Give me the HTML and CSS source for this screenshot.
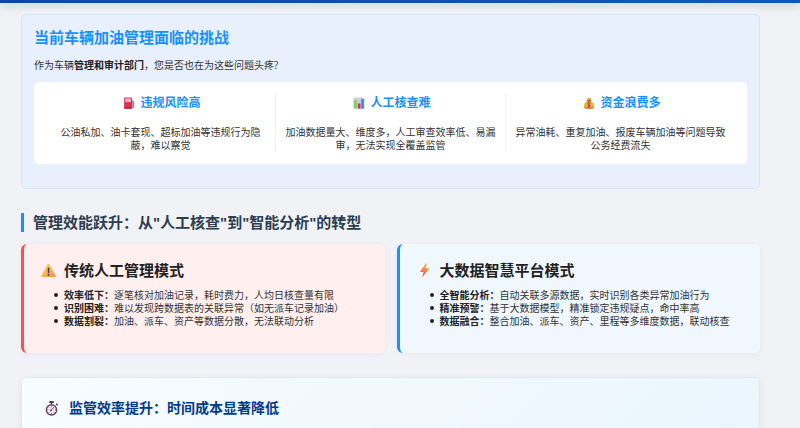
FILE: index.html
```
<!DOCTYPE html>
<html lang="zh-CN">
<head>
  <meta charset="UTF-8">
  <meta name="viewport" content="width=device-width, initial-scale=1.0">
  <title>车辆加油管理</title>
  <link rel="stylesheet" href="styles.css">
</head>
<body>
  <header class="top-bar"></header>

  <main class="container">
    <section class="challenge">
      <h2>当前车辆加油管理面临的挑战</h2>
      <p class="intro">作为车辆<strong>管理和审计部门</strong>，您是否也在为这些问题头疼?</p>
      <div class="pain-points">
        <div class="pain-item">
          <h3>
            <svg class="icon-sm" viewBox="0 0 32 32" aria-hidden="true">
              <path d="M23 8l6 5v12q0 4-4 4h-2" fill="#a9a0ae" stroke="#7d6b78" stroke-width="2"/>
              <rect x="3" y="1" width="21" height="30" rx="3" fill="#e5304f"/>
              <rect x="6" y="4" width="15" height="9" rx="1" fill="#e9d3de"/>
              <path d="M8 9h11" stroke="#a0869c" stroke-width="2"/>
              <path d="M3 26h21v3q0 2-2 2H5q-2 0-2-2z" fill="#c9214a"/>
            </svg>
            违规风险高
          </h3>
          <p>公油私加、油卡套现、超标加油等违规行为隐蔽，难以察觉</p>
        </div>
        <div class="pain-item">
          <h3>
            <svg class="icon-sm" viewBox="0 0 32 32" aria-hidden="true">
              <rect x="1" y="1" width="30" height="30" rx="3" fill="#d5cfdd"/>
              <path d="M1 11h30M1 21h30M11 1v30M21 1v30" stroke="#bdb5c8"/>
              <rect x="3" y="9" width="7" height="22" fill="#6fd65b"/>
              <rect x="13" y="17" width="7" height="14" fill="#e5266c"/>
              <rect x="22" y="5" width="7" height="26" fill="#2098dc"/>
            </svg>
            人工核查难
          </h3>
          <p>加油数据量大、维度多，人工审查效率低、易漏审，无法实现全覆盖监管</p>
        </div>
        <div class="pain-item">
          <h3>
            <svg class="icon-sm" viewBox="0 0 32 32" aria-hidden="true">
              <path d="M12 9L9 4q4 1 7-3 3 4 7 3l-3 5z" fill="#f4a32d"/>
              <path d="M12 9h8q10 7 10 15 0 7-7 7H9q-7 0-7-7 0-8 10-15z" fill="#f9b03a"/>
              <path d="M3 26q2 5 7 5h13q5 0 7-5-13 4-27 0z" fill="#dc7040"/>
              <path d="M11 10h10" stroke="#8b4a45" stroke-width="3"/>
              <path d="M20 16q-8-2-8 2 0 2 4 3t4 3q0 3-8 1M16 13v15" fill="none" stroke="#75443f" stroke-width="2"/>
            </svg>
            资金浪费多
          </h3>
          <p>异常油耗、重复加油、报废车辆加油等问题导致公务经费流失</p>
        </div>
      </div>
    </section>

    <h2 class="section-title">管理效能跃升：从"人工核查"到"智能分析"的转型</h2>

    <div class="compare">
      <section class="mode-card traditional">
        <h3>
          <svg class="icon" viewBox="0 0 32 32" aria-hidden="true">
            <defs>
              <linearGradient id="warn" x1="0" y1="0" x2="1" y2="1">
                <stop offset="0" stop-color="#ffd45c"/>
                <stop offset="1" stop-color="#f2933c"/>
              </linearGradient>
            </defs>
            <path d="M14 3q2-3 4 0l13 24q1 3-2 3H3q-3 0-2-3z" fill="url(#warn)"/>
            <path d="M16 11v9" stroke="#46384f" stroke-width="3" stroke-linecap="round"/>
            <circle cx="16" cy="25" r="2" fill="#46384f"/>
          </svg>
          传统人工管理模式
        </h3>
        <ul>
          <li><strong>效率低下：</strong>逐笔核对加油记录，耗时费力，人均日核查量有限</li>
          <li><strong>识别困难：</strong>难以发现跨数据表的关联异常（如无派车记录加油）</li>
          <li><strong>数据割裂：</strong>加油、派车、资产等数据分散，无法联动分析</li>
        </ul>
      </section>

      <section class="mode-card platform">
        <h3>
          <svg class="icon" viewBox="0 0 32 32" aria-hidden="true">
            <defs>
              <linearGradient id="bolt" x1="0" y1="0" x2="0" y2="1">
                <stop offset="0" stop-color="#ffad3b"/>
                <stop offset="1" stop-color="#f7474f"/>
              </linearGradient>
            </defs>
            <path d="M19 1L7 17q-1 2 1 2h6l-3 12 14-18q1-2-1-2h-6l3-9z" fill="url(#bolt)"/>
          </svg>
          大数据智慧平台模式
        </h3>
        <ul>
          <li><strong>全智能分析：</strong>自动关联多源数据，实时识别各类异常加油行为</li>
          <li><strong>精准预警：</strong>基于大数据模型，精准锁定违规疑点，命中率高</li>
          <li><strong>数据融合：</strong>整合加油、派车、资产、里程等多维度数据，联动核查</li>
        </ul>
      </section>
    </div>

    <section class="efficiency">
      <h3>
        <svg class="icon" viewBox="0 0 32 32" aria-hidden="true">
          <rect x="11" y="0" width="10" height="4" rx="1" fill="#49384f"/>
          <path d="M16 3v5M26 6l3 3" stroke="#49384f" stroke-width="3"/>
          <circle cx="16" cy="19" r="11" fill="#f0e8f3" stroke="#5b4564" stroke-width="3"/>
          <path d="M16 10v2M16 26v2M7 19h2M23 19h2M10 13l1 1M10 25l1-1M21 24l1 1" stroke="#6b5874" stroke-width="2"/>
          <path d="M14 21l7-8" stroke="#e0305c" stroke-width="2"/>
          <circle cx="15" cy="20" r="2" fill="#49384f"/>
        </svg>
        监管效率提升：时间成本显著降低
      </h3>
    </section>
  </main>
</body>
</html>
```
FILE: styles.css
```
* {
  box-sizing: border-box;
  margin: 0;
  padding: 0;
}
body {
  font-family: "Open Sans", "Noto Sans CJK SC", sans-serif;
  font-size: 10px;
  line-height: 13px;
  color: #333;
  background-color: #f0f2f5;
}
strong {
  color: #222;
}
.top-bar {
  height: 3px;
  background: linear-gradient(90deg, #0d47a1, #1557b5);
  box-shadow: 0 2px 8px rgba(0, 0, 0, 0.25);
}
.container {
  padding: 11px 40px 0 21px;
}

/* challenges */
.challenge {
  padding: 12px 12px 24px;
  background-color: #e8f0fe;
  border: 1px solid #d3e5fd;
  border-radius: 5px;
  margin-bottom: 24px;
}
.challenge h2 {
  font-size: 15px;
  line-height: 20px;
  color: #1890ff;
  margin-bottom: 12px;
}
.intro {
  margin-bottom: 10px;
}
.pain-points {
  display: flex;
  padding: 12px;
  background-color: #fff;
  border-radius: 5px;
}
.pain-item {
  flex: 1;
  padding: 0 8px;
  text-align: center;
  border-right: 1px solid #f0f0f0;
}
.pain-item:last-child {
  border-right: none;
}
.pain-item h3 {
  display: flex;
  justify-content: center;
  align-items: center;
  gap: 5px;
  padding-left: 3px;
  font-size: 12px;
  line-height: 18px;
  color: #1890ff;
  margin-bottom: 14px;
}
.icon-sm {
  width: 12px;
  height: 12px;
}

/* comparison */
.section-title {
  font-size: 15px;
  line-height: 19px;
  color: #2c3e50;
  border-left: 3px solid #1890ff;
  padding-left: 9px;
  margin-bottom: 12px;
}
.compare {
  display: grid;
  grid-template-columns: 1fr 1fr;
  gap: 12px;
  margin-bottom: 24px;
}
.mode-card {
  padding: 15px 17px 25px;
  border-left: 3px solid;
  border-radius: 6px;
  box-shadow: 0 1px 6px rgba(0, 0, 0, 0.05);
}
.mode-card h3 {
  display: flex;
  align-items: center;
  gap: 8px;
  font-size: 15px;
  line-height: 22px;
  color: #222;
  margin-bottom: 8px;
}
.mode-card ul {
  padding-left: 23px;
  list-style: none;
}
.mode-card li::before {
  content: "";
  display: inline-block;
  width: 4px;
  height: 4px;
  margin: 0 6px 0 -10px;
  border-radius: 50%;
  background-color: #222;
  vertical-align: 2px;
}
.traditional {
  background-color: #fff0ef;
  border-left-color: #ff4d4f;
}
.platform {
  background-color: #f0f7ff;
  border-left-color: #1890ff;
}
.icon {
  width: 15px;
  height: 15px;
}

/* efficiency */
.efficiency {
  padding: 20px 22px 24px;
  background: linear-gradient(135deg, #f7fcff, #eaf5fd);
  border: 1px solid #d9ebf5;
  border-radius: 6px;
  box-shadow: 0 2px 8px rgba(0, 0, 0, 0.06);
}
.efficiency h3 {
  display: flex;
  align-items: center;
  gap: 10px;
  font-size: 14px;
  line-height: 20px;
  color: #003a8c;
}
```
